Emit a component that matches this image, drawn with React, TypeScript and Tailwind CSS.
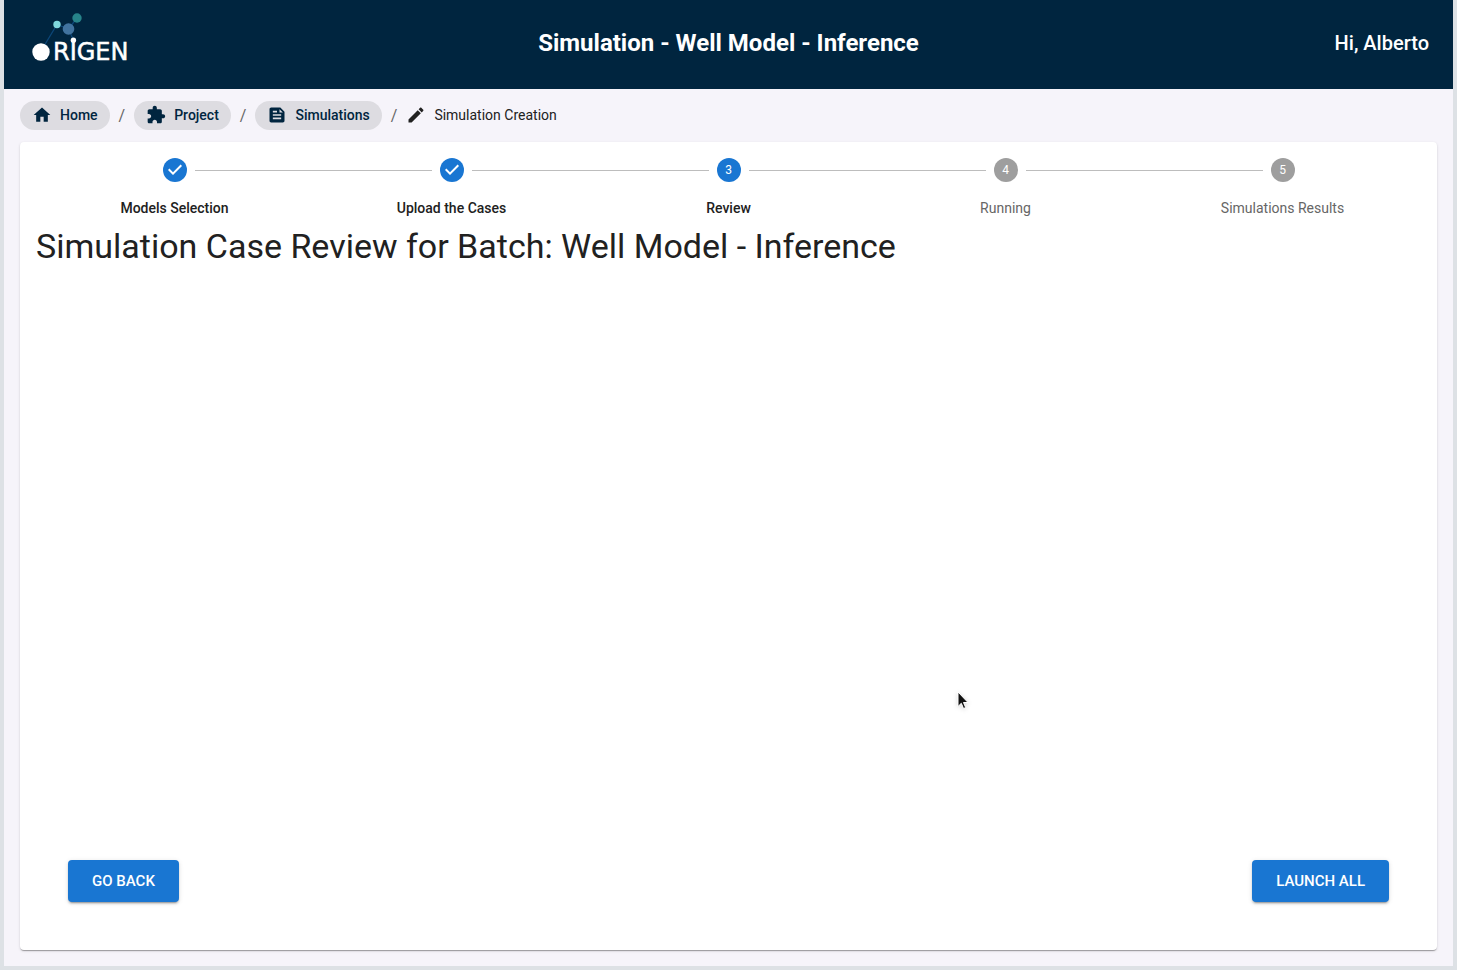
import React from "react";

const icons = {
  home: "M10 20v-6h4v6h5v-8h3L12 3 2 12h3v8z",
  extension:
    "M20.5 11H19V7c0-1.1-.9-2-2-2h-4V3.5C13 2.12 11.88 1 10.5 1S8 2.12 8 3.5V5H4c-1.1 0-1.99.9-1.99 2v3.8H3.5c1.49 0 2.7 1.21 2.7 2.7s-1.21 2.7-2.7 2.7H2V20c0 1.1.9 2 2 2h3.8v-1.5c0-1.49 1.21-2.7 2.7-2.7 1.49 0 2.7 1.21 2.7 2.7V22H17c1.1 0 2-.9 2-2v-4h1.5c1.38 0 2.5-1.12 2.5-2.5S21.88 11 20.5 11z",
  feed: "M16 3H5c-1.1 0-2 .9-2 2v14c0 1.1.9 2 2 2h14c1.1 0 2-.9 2-2V8l-5-5zM7 7h5v2H7V7zm10 10H7v-2h10v2zm0-4H7v-2h10v2zm-2-4V5l4 4h-4z",
  create:
    "M3 17.25V21h3.75L17.81 9.94l-3.75-3.75L3 17.25zM20.71 7.04c.39-.39.39-1.02 0-1.41l-2.34-2.34c-.39-.39-1.02-.39-1.41 0l-1.83 1.83 3.75 3.75 1.83-1.83z",
};

function Icon({ path }: { path: string }) {
  return (
    <svg viewBox="0 0 24 24" className="size-5 shrink-0 fill-current" aria-hidden="true">
      <path d={path} />
    </svg>
  );
}

function Logo() {
  return (
    <svg viewBox="0 0 104 60" className="h-[60px] w-[104px]" role="img" aria-label="Origen">
      <path
        d="M9 41 25 14.5 36.5 19 45 8M36.5 19 41.5 30"
        fill="none"
        stroke="#0b4678"
        strokeWidth="1.3"
      />
      <circle cx="25" cy="14.5" r="3.7" fill="#7fd8de" />
      <circle cx="45" cy="8" r="4.7" fill="#27848a" />
      <circle cx="36.5" cy="19" r="5.8" fill="#41739f" />
      <circle cx="41.4" cy="30.3" r="2.7" fill="#fff" />
      <circle cx="9" cy="42" r="8.7" fill="#fff" />
      <text
        x="21"
        y="50"
        fill="#fff"
        stroke="#fff"
        strokeWidth="0.5"
        className="font-['DejaVu_Sans',sans-serif] text-2xl"
      >
        RIGEN
      </text>
    </svg>
  );
}

const crumbs = [
  { label: "Home", icon: icons.home },
  { label: "Project", icon: icons.extension },
  { label: "Simulations", icon: icons.feed },
];

const steps = [
  { label: "Models Selection", state: "done" },
  { label: "Upload the Cases", state: "done" },
  { label: "Review", state: "active" },
  { label: "Running", state: "todo" },
  { label: "Simulations Results", state: "todo" },
];

function Breadcrumbs() {
  return (
    <nav aria-label="Breadcrumb" className="px-4 py-3">
      <ol className="flex flex-wrap items-center text-sm">
        {crumbs.map((c) => (
          <li key={c.label} className="flex items-center">
            <a
              href="#"
              className="flex h-[29px] items-center gap-2 rounded-full bg-[#dddce1] px-3 pb-px font-medium text-[#00253f]"
            >
              <Icon path={c.icon} />
              {c.label}
            </a>
            <span className="mx-[9px] text-base text-[#666]" aria-hidden="true">
              /
            </span>
          </li>
        ))}
        <li className="flex h-[29px] items-center gap-2 pb-px text-[#212121]" aria-current="page">
          <Icon path={icons.create} />
          Simulation Creation
        </li>
      </ol>
    </nav>
  );
}

function Stepper() {
  return (
    <ol className="grid grid-cols-5">
      {steps.map((s, i) => (
        <li key={s.label} className="flex flex-col items-center gap-4">
          <div className="flex w-full items-center gap-2">
            <span className={i > 0 ? "h-px flex-1 bg-[#bdbdbd]" : "h-px flex-1"} />
            <span
              className={
                s.state === "todo"
                  ? "flex size-6 items-center justify-center rounded-full bg-[#9e9e9e] text-xs text-white"
                  : "flex size-6 items-center justify-center rounded-full bg-[#1976d2] text-xs text-white"
              }
            >
              {s.state === "done" ? (
                <svg viewBox="0 0 24 24" className="size-6 fill-white" role="img" aria-label="Completed">
                  <path d="M10 17l-5-5 1.4-1.4 3.6 3.6 7.6-7.6L19 8l-9 9z" />
                </svg>
              ) : (
                i + 1
              )}
            </span>
            <span className={i < steps.length - 1 ? "h-px flex-1 bg-[#bdbdbd]" : "h-px flex-1"} />
          </div>
          <span
            className={
              s.state === "todo"
                ? "text-center text-sm text-[#666]"
                : "text-center text-sm font-medium text-[#212121]"
            }
          >
            {s.label}
          </span>
        </li>
      ))}
    </ol>
  );
}

function ActionButton({ children }: { children: React.ReactNode }) {
  return (
    <button
      type="button"
      className="h-[42px] rounded bg-[#1976d2] px-6 text-[15px] font-medium text-white uppercase shadow-[0_3px_1px_-2px_rgba(0,0,0,0.2),0_2px_2px_0_rgba(0,0,0,0.14),0_1px_5px_0_rgba(0,0,0,0.12)]"
    >
      {children}
    </button>
  );
}

export default function App() {
  return (
    <div className="flex min-h-screen flex-col border-x-4 border-b-4 border-[#dde1e5] bg-[#f6f4fa] font-['Roboto',sans-serif]">
      <header className="grid h-[89px] grid-cols-[1fr_auto_1fr] items-center bg-[#00253f] px-6 pb-[3px] text-white">
        <div className="mb-1.5 pl-1">
          <Logo />
        </div>
        <h1 className="text-2xl font-bold">Simulation - Well Model - Inference</h1>
        <p className="text-right text-xl font-medium">Hi, Alberto</p>
      </header>
      <Breadcrumbs />
      <main className="mx-4 mb-4 flex flex-1 flex-col rounded bg-white p-4 shadow-[0_2px_1px_-1px_rgba(0,0,0,0.2),0_1px_1px_0_rgba(0,0,0,0.14),0_1px_3px_0_rgba(0,0,0,0.12)]">
        <Stepper />
        <h2 className="mt-2 text-[34px] leading-10 text-[#212121]">
          Simulation Case Review for Batch: Well Model - Inference
        </h2>
        <div className="mt-auto flex justify-between p-8">
          <ActionButton>Go back</ActionButton>
          <ActionButton>Launch all</ActionButton>
        </div>
      </main>
      <svg
        viewBox="0 0 12 19"
        className="pointer-events-none absolute top-[691px] left-[957px] h-[19px] w-[12px] drop-shadow-sm"
        aria-hidden="true"
      >
        <path
          d="M1 1v14.500l3.300-3.200 2.200 5.200 2.200-.9-2.200-5.100h4.500z"
          fill="#111"
          stroke="#fff"
          strokeWidth="1"
        />
      </svg>
    </div>
  );
}
